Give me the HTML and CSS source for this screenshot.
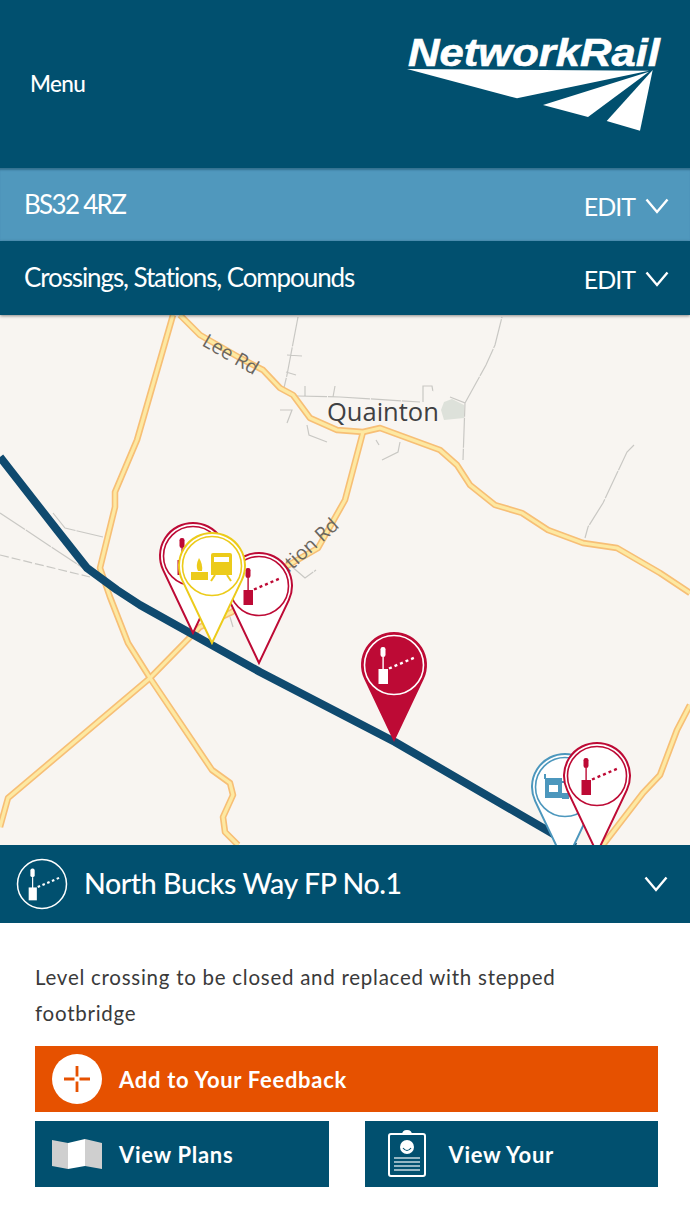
FILE: index.html
```html
<!DOCTYPE html>
<html lang="en">
<head>
<meta charset="utf-8">
<title>Network Rail</title>
<link rel="stylesheet" href="styles.css">
</head>
<body>
<svg class="defs" width="0" height="0" aria-hidden="true">
  <defs>
    <path id="pin" d="M0 77L-29.8 14.1A33 33 0 1 1 29.8 14.1Z"/>
    <g id="crossing">
      <rect class="ic-fill" x="-13.5" y="-18" width="5" height="10" rx="2.2"/>
      <rect class="ic-fill" x="-11.6" y="-8" width="1.4" height="13"/>
      <rect class="ic-fill" x="-15.5" y="4" width="9.5" height="15"/>
      <path class="ic-dots" d="M-5 3.5L22 -8"/>
    </g>
    <path id="rd-a" d="M180 315L200 335L240 358L263 370L280 388L293 395L310 418L337 430L363 432L380 428L440 450L457 465L470 485L495 505L522 513L548 530L583 543L617 548L660 573L690 593"/>
    <path id="rd-b" d="M173 315L137 440L115 492L115 507L100 568L110 597L128 643L150 678L212 770L230 783L233 795L223 817L225 832L238 845"/>
    <path id="rd-c" d="M0 827L8 798L150 678L200 627L232 612L280 570L318 548L345 500L363 432"/>
    <path id="rd-d" d="M603 845L643 793L660 775L677 730L690 705"/>
  </defs>
</svg>

<header class="top">
  <span class="menu">Menu</span>
  <svg class="logo" viewBox="408 37 252 94" width="252" height="94" role="img" aria-label="Network Rail">
    <text class="logo-text" x="408" y="66" textLength="252" lengthAdjust="spacingAndGlyphs">NetworkRail</text>
    <path class="logo-mark" d="M407 69L649 70.700L517 98.300Z"/>
    <path class="logo-mark" d="M649 71.700L543 105L588 117Z"/>
    <path class="logo-mark" d="M652.700 70L606.700 121L640 130.700Z"/>
  </svg>
</header>

<div class="bar bar-light">
  <span class="bar-label bar-code">BS32 4RZ</span>
  <span class="bar-edit">EDIT
    <svg class="chev" viewBox="0 0 24 16" width="24" height="16"><path d="M1.500 1.500L12 14L22.500 1.500"/></svg>
  </span>
</div>
<div class="bar bar-dark">
  <span class="bar-label">Crossings, Stations, Compounds</span>
  <span class="bar-edit">EDIT
    <svg class="chev" viewBox="0 0 24 16" width="24" height="16"><path d="M1.500 1.500L12 14L22.500 1.500"/></svg>
  </span>
</div>

<svg class="map" viewBox="0 315 690 530" width="690" height="530" role="img" aria-label="Map">
  <path class="grey" d="M298 317L287 375L283 392M287 355L302 356M286 372L296 375M297 396L340 397M305 386V396M335 386L333 397M340 397L420 402M423 402V386H432L433 392M450 397L465 403L463 460M465 403L486 365L495 345L502 317"/>
  <path class="grey" d="M280 410H292L287 423M307 425L309 435L327 442M376 440L379 445M400 442L398 452L382 460"/>
  <path class="grey" d="M634 445L627 452L603 503L588 527L585 538M0 513L83 568M53 513L65 528L103 537"/>
  <path class="grey grey-dash" d="M0 555L90 577"/>
  <path class="grey" d="M290 565L305 578L316 570M230 617L233 627"/>
  <path class="blob" d="M444 402L452 399L464 405V418L444 420L441 410Z"/>

  <use href="#rd-b" class="road-o"/><use href="#rd-c" class="road-o"/><use href="#rd-a" class="road-o"/><use href="#rd-d" class="road-o"/>
  <use href="#rd-b" class="road-y"/><use href="#rd-c" class="road-y"/><use href="#rd-a" class="road-y"/><use href="#rd-d" class="road-y"/>

  <text class="map-small" transform="translate(201 345) rotate(30)">Lee Rd</text>
  <text class="map-small" transform="translate(271 589) rotate(-42)">Station Rd</text>
  <text class="map-town" x="327" y="421">Quainton</text>

  <path class="rail" d="M0 457L57 530L87 568L117 590L140 605L260 672L395 742L550 832L575 847"/>

  <g class="pin-hollow pin-red" transform="translate(193 556)">
    <use href="#pin"/><circle class="ring" r="29.500"/><use href="#crossing"/>
  </g>
  <g class="pin-hollow pin-red" transform="translate(259 586)">
    <use href="#pin"/><circle class="ring" r="29.500"/><use href="#crossing"/>
  </g>
  <g class="pin-hollow pin-yellow" transform="translate(212 566)">
    <use href="#pin"/><circle class="ring" r="29.500"/>
    <path class="ic-fill ic-cut" d="M-1 -11Q-1 -13 1 -13H18Q20 -13 20 -11V9H-1ZM2 -9V-4H17V-9Z"/>
    <path class="ic-line" d="M3 9L-1 15M15 9L19 15"/>
    <rect class="ic-fill" x="-21" y="6" width="17" height="8"/>
    <path class="ic-fill" d="M-13 -8Q-9 -2 -10 5H-14Q-17 0 -13 -8Z"/>
  </g>
  <g class="pin-hollow pin-blue" transform="translate(565 787)">
    <use href="#pin"/><circle class="ring" r="29.500"/>
    <path class="ic-fill ic-cut" d="M-20 -9H-3V11H-20ZM-16 -2V5H-7V-2Z"/>
    <rect class="ic-fill" x="-3" y="6" width="7" height="6"/>
    <path class="ic-line" d="M-20 -13V-8M-3 -5H0"/>
  </g>
  <g class="pin-hollow pin-red" transform="translate(597 776)">
    <use href="#pin"/><circle class="ring" r="29.500"/><use href="#crossing"/>
  </g>
  <g class="pin-solid" transform="translate(394 665)">
    <use href="#pin"/><circle class="ring" r="29.500"/><use href="#crossing"/>
  </g>
</svg>

<section class="title-bar">
  <svg class="title-icon" viewBox="-26 -26 52 52" width="52" height="52" aria-hidden="true">
    <circle class="ring" r="24.500"/>
    <use href="#crossing" transform="scale(.86)"/>
  </svg>
  <h1 class="title">North Bucks Way FP No.1</h1>
  <svg class="chev chev-title" viewBox="0 0 24 16" width="24" height="16"><path d="M1.500 1.500L12 14L22.500 1.500"/></svg>
</section>

<main class="detail">
  <p class="desc">Level crossing to be closed and replaced with stepped footbridge</p>
  <a class="btn btn-orange">
    <span class="btn-icon">
      <svg viewBox="-25 -25 50 50" width="50" height="50" aria-hidden="true">
        <circle class="plus-disc" r="25"/>
        <path class="plus" d="M-13 0H-2.500M2.500 0H13M0 -13V-2.500M0 2.500V13"/>
      </svg>
    </span>
    Add to Your Feedback
  </a>
  <div class="btn-row">
    <a class="btn btn-blue">
      <span class="btn-icon">
        <svg viewBox="52 1138 50 32" width="50" height="32" aria-hidden="true">
          <path class="fold-grey" d="M52 1140L68 1143V1169L52 1166Z"/>
          <path class="fold-white" d="M68 1143L85 1139V1166L68 1169Z"/>
          <path class="fold-grey" d="M85 1139L102 1143V1169L85 1166Z"/>
        </svg>
      </span>
      View Plans
    </a>
    <a class="btn btn-blue">
      <span class="btn-icon">
        <svg viewBox="387 1132 40 48" width="40" height="48" aria-hidden="true">
          <rect class="clip-board" x="389" y="1136" width="36" height="42" rx="2"/>
          <path class="clip-top" d="M402 1137Q402 1132 407 1132Q412 1132 412 1137Z"/>
          <circle class="clip-face" cx="407" cy="1149" r="7"/>
          <path class="clip-smile" d="M403 1150Q407 1155 411 1150"/>
          <path class="clip-lines" d="M394 1160H420M394 1164H420M394 1168H420M394 1172H420"/>
        </svg>
      </span>
      View Your
    </a>
  </div>
</main>
</body>
</html>
```

FILE: styles.css
```css
* { box-sizing: border-box; }

html, body {
  margin: 0;
  padding: 0;
  background: #fff;
}

body {
  width: 690px;
  height: 1227px;
  overflow: hidden;
  font-family: Lato, "Open Sans", sans-serif;
  color: #fff;
}

.defs { position: absolute; }

.top {
  height: 168px;
  background: #01506f;
  display: flex;
  align-items: center;
  justify-content: space-between;
  padding: 0 30px;
}

.menu {
  font-size: 22.500px;
  letter-spacing: -0.6px;
  font-weight: 500;
  margin-top: -2px;
}

.logo { display: block; overflow: visible; }

.logo-text {
  font-family: "Liberation Sans", Arial, sans-serif;
  font-weight: 700;
  font-style: italic;
  font-size: 38.500px;
  fill: #fff;
  stroke: #fff;
  stroke-width: .6;
}

.logo-mark { fill: #fff; }

.bar {
  display: flex;
  align-items: center;
  justify-content: space-between;
  padding: 0 21px 0 24px;
  position: relative;
}

.bar-light {
  height: 73px;
  background: #5098bd;
  box-shadow: inset 0 3px 2px -1px rgba(0, 40, 60, .35);
}

.bar-dark {
  height: 74px;
  background: #01506f;
  box-shadow: 0 1px 3px rgba(0, 0, 0, .45);
}

.bar-label {
  font-size: 26px;
  letter-spacing: -1.1px;
  margin-top: -2px;
}

.bar-code {
  letter-spacing: -1.7px;
}

.bar-edit {
  display: flex;
  align-items: center;
  gap: 10px;
  font-size: 25px;
  letter-spacing: -1px;
  margin-top: 2px;
}

.chev { display: block; }

.chev path {
  fill: none;
  stroke: #fff;
  stroke-width: 2.400;
}

.map {
  display: block;
  background: #f8f5f1;
}

.grey {
  fill: none;
  stroke: #c9c8c4;
  stroke-width: 1.200;
  stroke-dasharray: 30 1;
}

.grey-dash { stroke-dasharray: 9 3; }

.blob { fill: #dde1da; }

.road-o {
  fill: none;
  stroke: #f7bf76;
  stroke-width: 6.500;
  stroke-linejoin: round;
}

.road-y {
  fill: none;
  stroke: #fde9a2;
  stroke-width: 3.200;
  stroke-linejoin: round;
}

.rail {
  fill: none;
  stroke: #0f4a6f;
  stroke-width: 8;
  stroke-linejoin: round;
}

.map-small {
  font-family: "Open Sans", sans-serif;
  font-size: 19.500px;
  fill: #6a6660;
}

.map-town {
  font-family: "Open Sans", sans-serif;
  font-size: 25.500px;
  fill: #3f4042;
}

.pin-hollow > use:first-child { fill: #fff; stroke-width: 2; }
.pin-hollow .ring { fill: none; stroke-width: 1.600; }

.pin-red { --c: #bd0a35; }
.pin-yellow { --c: #eccb1a; }
.pin-blue { --c: #4c97bd; }

.pin-hollow > use:first-child,
.pin-hollow .ring { stroke: var(--c); }

.ic-fill { fill: var(--c); }
.ic-cut { fill-rule: evenodd; }

.ic-line {
  fill: none;
  stroke: var(--c);
  stroke-width: 2;
}

.ic-dots {
  fill: none;
  stroke: var(--c);
  stroke-width: 2.400;
  stroke-dasharray: 3 3;
}

.pin-solid { --c: #fff; }
.pin-solid > use:first-child { fill: #bd0a35; }
.pin-solid .ring { fill: none; stroke: #fff; stroke-width: 1.600; }

.title-bar {
  --c: #fff;
  height: 78px;
  background: #01506f;
  display: flex;
  align-items: center;
  padding: 0 22px 0 16px;
}

.title-icon { display: block; flex: none; }
.title-icon .ring { fill: none; stroke: #fff; stroke-width: 1.500; }

.title {
  margin: -3px 0 0 16px;
  flex: 1;
  font-size: 28.500px;
  font-weight: 500;
  letter-spacing: -0.4px;
}

.detail { padding: 36px 32px 0 35px; }

.desc {
  margin: 0 0 15px;
  max-width: 535px;
  color: #3a3a3a;
  font-size: 20.500px;
  line-height: 36px;
  letter-spacing: .74px;
}

.btn {
  display: flex;
  align-items: center;
  height: 66px;
  color: #fff;
  font-size: 22px;
  font-weight: 700;
  letter-spacing: .7px;
}

.btn-orange { background: #e65100; }
.btn-blue { background: #01506f; }

.btn-icon {
  flex: none;
  width: 84px;
  display: flex;
  justify-content: center;
}

.btn svg { display: block; }

.btn-row {
  display: grid;
  grid-template-columns: 1fr 1fr;
  gap: 36px;
  margin-top: 9px;
}

.plus-disc { fill: #fff; }

.plus {
  fill: none;
  stroke: #e65100;
  stroke-width: 2.800;
}

.fold-grey { fill: #cfcfcf; }
.fold-white { fill: #fff; }

.clip-board {
  fill: none;
  stroke: #fff;
  stroke-width: 2;
}

.clip-top { fill: #fff; }
.clip-face { fill: #fff; }

.clip-smile {
  fill: none;
  stroke: #01506f;
  stroke-width: 1.200;
}

.clip-lines {
  fill: none;
  stroke: #c5d7e0;
  stroke-width: 1.400;
}
```
